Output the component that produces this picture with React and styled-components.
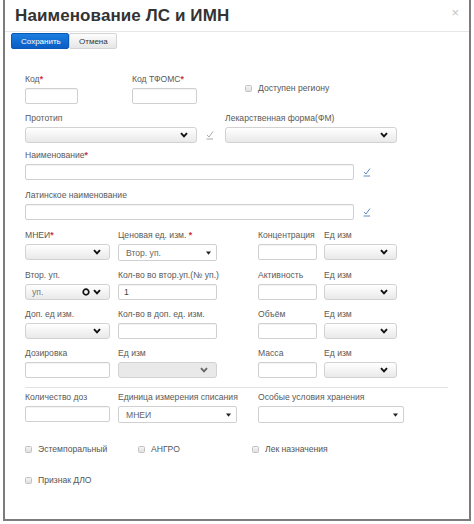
import React from "react";
import styled, { createGlobalStyle } from "styled-components";

const GlobalStyle = createGlobalStyle`
  html, body {
    margin: 0;
    padding: 0;
    background: #ffffff;
  }
  body {
    font-family: "Liberation Sans", Arial, sans-serif;
  }
`;

const Modal = styled.div`
  box-sizing: border-box;
  margin-left: 3px;
  width: 468px;
  height: 521px;
  border: 2px solid #7c7c7c;
  border-top: none;
  background: #fff;
`;

const Header = styled.div`
  height: 32px;
  box-sizing: border-box;
  border-bottom: 1px solid #e6e6e6;
  display: flex;
  align-items: center;
  justify-content: space-between;
  padding: 1px 10px 0 10px;
`;

const Title = styled.h1`
  margin: 0;
  font-size: 17px;
  font-weight: bold;
  color: #333;
  letter-spacing: 0.1px;
`;

const Close = styled.span`
  font-size: 13px;
  color: #c4c4c4;
  margin-top: -8px;
`;

const Toolbar = styled.div`
  display: flex;
  padding: 1px 0 0 6px;
`;

const Button = styled.button`
  height: 16px;
  padding: 0 9px;
  font-family: inherit;
  font-size: 8px;
  border-radius: 2px;
  border: 1px solid ${(p) => (p.$primary ? "#0a58b8" : "#d4d4d4")};
  color: ${(p) => (p.$primary ? "#fff" : "#333")};
  background: ${(p) =>
    p.$primary
      ? "linear-gradient(#1a7de0, #0a5ec4)"
      : "linear-gradient(#fdfdfd, #e6e6e6)"};
  width: ${(p) => p.$w}px;
`;

const Form = styled.div`
  padding: 24px 0 0 20px;
`;

const Row = styled.div`
  display: flex;
  align-items: flex-start;
  margin-bottom: ${(p) => (p.$mb === undefined ? 8 : p.$mb)}px;
`;

const Field = styled.div`
  display: flex;
  flex-direction: column;
  width: ${(p) => p.$w}px;
  margin-left: ${(p) => p.$ml || 0}px;
`;

const Label = styled.div`
  height: 12px;
  line-height: 12px;
  margin-bottom: 3px;
  font-size: 8.6px;
  color: #5a5a5a;
  white-space: nowrap;
`;

const Req = styled.span`
  color: #c9303e;
  font-weight: bold;
`;

const Control = styled.div`
  display: flex;
  align-items: center;
  gap: 9px;
`;

const Input = styled.div`
  box-sizing: border-box;
  width: ${(p) => p.$w}px;
  height: 16px;
  border: 1px solid #d0d0d0;
  border-radius: 2px;
  background: #fff;
  box-shadow: inset 0 1px 1px rgba(0, 0, 0, 0.05);
  font-size: 8.6px;
  color: #444;
  padding-left: 5px;
  display: flex;
  align-items: center;
`;

const Select = styled.div`
  box-sizing: border-box;
  width: ${(p) => p.$w}px;
  height: 16px;
  border: 1px solid #d2d2d2;
  border-radius: 3px;
  background: ${(p) =>
    p.$disabled ? "#e9e9e9" : "linear-gradient(#ffffff, #e9e9e9)"};
  display: flex;
  align-items: center;
  justify-content: space-between;
  padding: 0 8px 0 6px;
  font-size: 8.6px;
  color: #777;
`;

const NativeSelect = styled.div`
  box-sizing: border-box;
  width: ${(p) => p.$w}px;
  height: 17px;
  border: 1px solid #d0d0d0;
  border-radius: 2px;
  background: #fff;
  display: flex;
  align-items: center;
  justify-content: space-between;
  padding: 0 5px 0 7px;
  font-size: 8.6px;
  color: #666;
`;

const Icons = styled.span`
  display: flex;
  align-items: center;
  gap: 3px;
`;

const CheckItem = styled.label`
  display: flex;
  align-items: center;
  gap: 6px;
  font-size: 8.6px;
  color: #555;
  width: ${(p) => p.$w}px;
  margin-left: ${(p) => p.$ml || 0}px;
  margin-top: ${(p) => p.$mt || 0}px;
  white-space: nowrap;
`;

const Box = styled.span`
  box-sizing: border-box;
  width: 7px;
  height: 7px;
  border: 1px solid #c2c2c2;
  border-radius: 1.5px;
  background: linear-gradient(#f4f4f4, #e0e0e0);
`;

const Divider = styled.div`
  width: 423px;
  height: 1px;
  background: #e2e2e2;
  margin: 9px 0 3px 0;
`;

const Chevron = ({ color = "#111" }) => (
  <svg width="8" height="6" viewBox="0 0 8 6">
    <polyline points="1,1.2 4,4.4 7,1.2" fill="none" stroke={color} strokeWidth="1.9" />
  </svg>
);

const Caret = () => (
  <svg width="5" height="4" viewBox="0 0 5 4">
    <polygon points="0,0.5 5,0.5 2.5,3.8" fill="#222" />
  </svg>
);

const Ring = () => (
  <svg width="8" height="8" viewBox="0 0 8 8">
    <circle cx="4" cy="4" r="2.8" fill="none" stroke="#111" strokeWidth="1.7" />
  </svg>
);

const Tick = ({ blue }) => (
  <svg width="8" height="10" viewBox="0 0 8 10">
    <polyline
      points="1,5 3,7 7,1.5"
      fill="none"
      stroke={blue ? "#4a7fb8" : "#a0a0a0"}
      strokeWidth="0.9"
    />
    <line x1="0.5" y1="9" x2="7" y2="9" stroke={blue ? "#4a7fb8" : "#a0a0a0"} strokeWidth="0.9" />
  </svg>
);

const Star = () => <Req>*</Req>;

const MeasureRow = ({ a, b, c, last }) => (
  <Row $mb={last ? 0 : 8}>
    <Field $w={85}>
      <Label>{a.label}</Label>
      {a.control}
    </Field>
    <Field $w={99} $ml={8}>
      <Label>{b.label}</Label>
      {b.control}
    </Field>
    <Field $w={59} $ml={41}>
      <Label>{c}</Label>
      <Input $w={59} />
    </Field>
    <Field $w={73} $ml={7}>
      <Label>Ед изм</Label>
      <Select $w={73}>
        <span />
        <Chevron />
      </Select>
    </Field>
  </Row>
);

export default function App() {
  return (
    <>
      <GlobalStyle />
      <Modal>
        <Header>
          <Title>Наименование ЛС и ИМН</Title>
          <Close>×</Close>
        </Header>
        <Toolbar>
          <Button $primary $w={58}>Сохранить</Button>
          <Button $w={48}>Отмена</Button>
        </Toolbar>
        <Form>
          <Row>
            <Field $w={53}>
              <Label>Код<Star /></Label>
              <Input $w={53} />
            </Field>
            <Field $w={65} $ml={54}>
              <Label>Код ТФОМС<Star /></Label>
              <Input $w={65} />
            </Field>
            <CheckItem $ml={48} $mt={10}>
              <Box />
              Доступен региону
            </CheckItem>
          </Row>

          <Row $mb={6}>
            <Field $w={189}>
              <Label>Прототип</Label>
              <Control>
                <Select $w={172}>
                  <span />
                  <Chevron />
                </Select>
                <Tick />
              </Control>
            </Field>
            <Field $w={172} $ml={11}>
              <Label>Лекарственная форма(ФМ)</Label>
              <Select $w={172}>
                <span />
                <Chevron />
              </Select>
            </Field>
          </Row>

          <Row $mb={9}>
            <Field $w={346}>
              <Label>Наименование<Star /></Label>
              <Control>
                <Input $w={329} />
                <Tick blue />
              </Control>
            </Field>
          </Row>

          <Row $mb={9}>
            <Field $w={346}>
              <Label>Латинское наименование</Label>
              <Control>
                <Input $w={329} />
                <Tick blue />
              </Control>
            </Field>
          </Row>

          <MeasureRow
            a={{
              label: (
                <>
                  МНЕИ<Star />
                </>
              ),
              control: (
                <Select $w={85}>
                  <span />
                  <Chevron />
                </Select>
              ),
            }}
            b={{
              label: (
                <>
                  Ценовая ед. изм. <Star />
                </>
              ),
              control: (
                <NativeSelect $w={99}>
                  <span>Втор. уп.</span>
                  <Caret />
                </NativeSelect>
              ),
            }}
            c="Концентрация"
          />

          <MeasureRow
            a={{
              label: "Втор. уп.",
              control: (
                <Select $w={85}>
                  <span>уп.</span>
                  <Icons>
                    <Ring />
                    <Chevron />
                  </Icons>
                </Select>
              ),
            }}
            b={{
              label: "Кол-во во втор.уп.(№ уп.)",
              control: <Input $w={99}>1</Input>,
            }}
            c="Активность"
          />

          <MeasureRow
            a={{
              label: "Доп. ед изм.",
              control: (
                <Select $w={85}>
                  <span />
                  <Chevron />
                </Select>
              ),
            }}
            b={{
              label: "Кол-во в доп. ед. изм.",
              control: <Input $w={99} />,
            }}
            c="Объём"
          />

          <MeasureRow
            last
            a={{
              label: "Дозировка",
              control: <Input $w={85} />,
            }}
            b={{
              label: "Ед изм",
              control: (
                <Select $w={99} $disabled>
                  <span />
                  <Chevron color="#666" />
                </Select>
              ),
            }}
            c="Масса"
          />

          <Divider />

          <Row $mb={0}>
            <Field $w={85}>
              <Label>Количество доз</Label>
              <Input $w={85} />
            </Field>
            <Field $w={119} $ml={8}>
              <Label>Единица измерения списания</Label>
              <NativeSelect $w={119}>
                <span>МНЕИ</span>
                <Caret />
              </NativeSelect>
            </Field>
            <Field $w={146} $ml={21}>
              <Label>Особые условия хранения</Label>
              <NativeSelect $w={146}>
                <span />
                <Caret />
              </NativeSelect>
            </Field>
          </Row>

          <Row $mb={0}>
            <CheckItem $w={113} $mt={21}>
              <Box />
              Эстемпоральный
            </CheckItem>
            <CheckItem $w={114} $mt={21}>
              <Box />
              АНГРО
            </CheckItem>
            <CheckItem $mt={21}>
              <Box />
              Лек назначения
            </CheckItem>
          </Row>

          <Row>
            <CheckItem $mt={21}>
              <Box />
              Признак ДЛО
            </CheckItem>
          </Row>
        </Form>
      </Modal>
    </>
  );
}
